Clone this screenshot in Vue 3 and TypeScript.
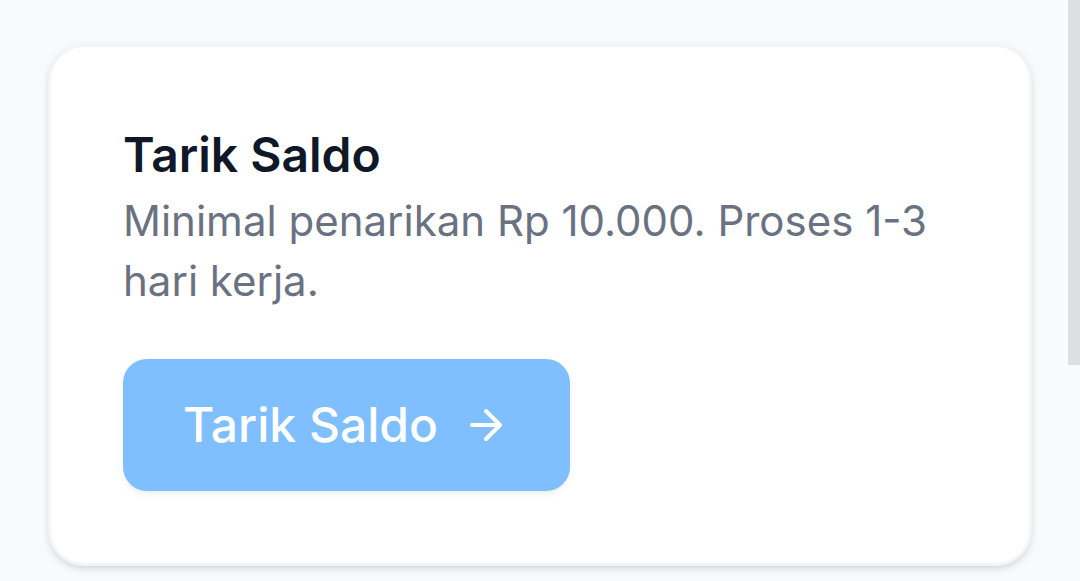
<script setup lang="ts">
import { computed } from 'vue'

const minimum: number = 10000
const processingDays: string = '1-3'
const minimumLabel = computed(() => 'Rp ' + String(minimum).replace(/\B(?=(\d{3})+$)/g, '.'))
</script>

<template>
  <main class="page">
    <section class="card">
      <h2 class="title">Tarik Saldo</h2>
      <p class="description">Minimal penarikan {{ minimumLabel }}. Proses {{ processingDays }} hari kerja.</p>
      <button class="withdraw" type="button" disabled>
        <span>Tarik Saldo</span>
        <svg class="arrow" viewBox="0 0 24 24" aria-hidden="true">
          <path d="M5 12h14M12 5l7 7-7 7" />
        </svg>
      </button>
    </section>
    <div class="scroll-thumb" aria-hidden="true"></div>
  </main>
</template>

<style>
body {
  margin: 0;
  background: #f9fafc;
}
</style>

<style scoped>
.page {
  padding: 44px 48px 15px;
  font-family: Inter, "Liberation Sans", sans-serif;
}

.card {
  padding: 72px;
  border: 3px solid #f3f4f6;
  border-radius: 36px;
  background: #ffffff;
  box-shadow: 0 3px 9px rgba(0, 0, 0, 0.1), 0 3px 6px -3px rgba(0, 0, 0, 0.1);
}

.title {
  margin: 0;
  color: #101828;
  font-size: 48px;
  line-height: 72px;
  font-weight: 600;
}

.description {
  margin: 0;
  color: #6a7282;
  font-size: 42px;
  line-height: 60px;
}

.withdraw {
  display: inline-flex;
  align-items: center;
  gap: 24px;
  margin-top: 48px;
  padding: 30px 60px;
  border: 0;
  border-radius: 24px;
  background: #80bfff;
  box-shadow: 0 3px 9px rgba(0, 0, 0, 0.05), 0 3px 6px -3px rgba(0, 0, 0, 0.05);
  color: #ffffff;
  font-family: inherit;
  font-size: 48px;
  line-height: 72px;
  font-weight: 500;
}

.arrow {
  width: 48px;
  height: 48px;
  fill: none;
  stroke: currentColor;
  stroke-width: 2;
  stroke-linecap: round;
  stroke-linejoin: round;
}

.scroll-thumb {
  position: absolute;
  top: 0;
  right: 0;
  width: 12px;
  height: 365px;
  background: #dedfe0;
}
</style>
